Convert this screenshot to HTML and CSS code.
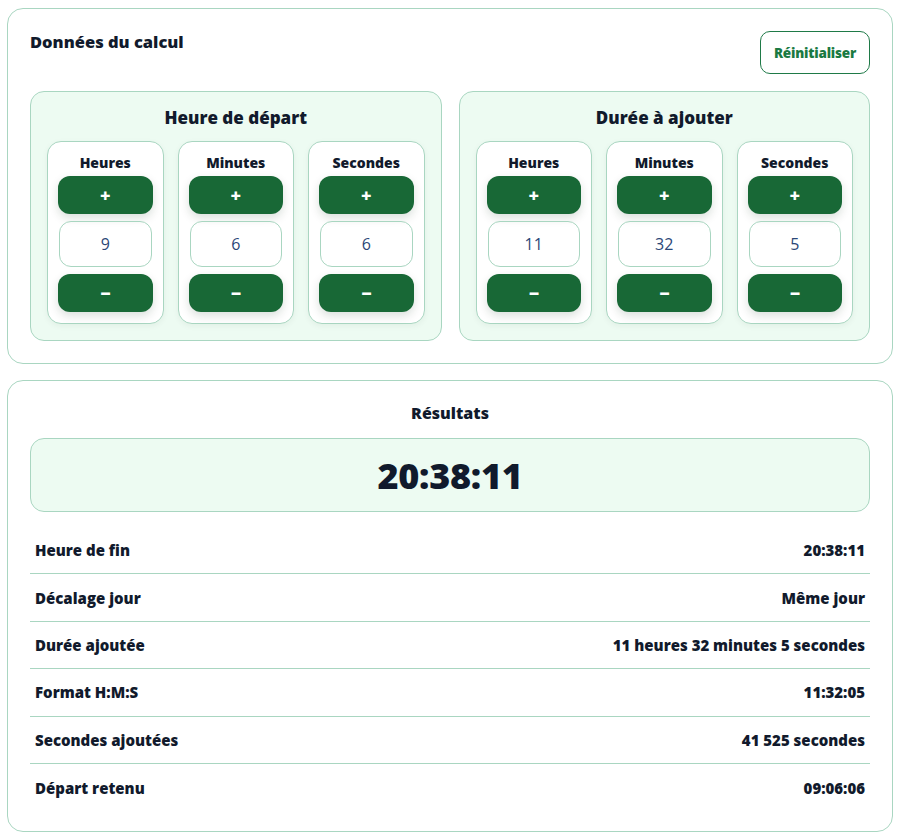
FILE: index.html
```html
<!DOCTYPE html>
<html lang="fr">
<head>
<meta charset="utf-8">
<title>Calcul</title>
<link rel="stylesheet" href="styles.css">
</head>
<body>
<main class="page">
  <section class="card inputs">
    <div class="card-head">
      <h2 class="card-title">Données du calcul</h2>
      <button class="reset">Réinitialiser</button>
    </div>
    <div class="groups">
      <div class="group">
        <h3 class="group-title">Heure de départ</h3>
        <div class="units">
          <div class="unit">
            <div class="unit-label">Heures</div>
            <button class="step">+</button>
            <div class="value">9</div>
            <button class="step">−</button>
          </div>
          <div class="unit">
            <div class="unit-label">Minutes</div>
            <button class="step">+</button>
            <div class="value">6</div>
            <button class="step">−</button>
          </div>
          <div class="unit">
            <div class="unit-label">Secondes</div>
            <button class="step">+</button>
            <div class="value">6</div>
            <button class="step">−</button>
          </div>
        </div>
      </div>
      <div class="group">
        <h3 class="group-title">Durée à ajouter</h3>
        <div class="units">
          <div class="unit">
            <div class="unit-label">Heures</div>
            <button class="step">+</button>
            <div class="value">11</div>
            <button class="step">−</button>
          </div>
          <div class="unit">
            <div class="unit-label">Minutes</div>
            <button class="step">+</button>
            <div class="value">32</div>
            <button class="step">−</button>
          </div>
          <div class="unit">
            <div class="unit-label">Secondes</div>
            <button class="step">+</button>
            <div class="value">5</div>
            <button class="step">−</button>
          </div>
        </div>
      </div>
    </div>
  </section>

  <section class="card results">
    <h2 class="results-title">Résultats</h2>
    <div class="big">20:38:11</div>
    <div class="rows">
      <div class="row"><span>Heure de fin</span><span>20:38:11</span></div>
      <div class="row"><span>Décalage jour</span><span>Même jour</span></div>
      <div class="row"><span>Durée ajoutée</span><span>11 heures 32 minutes 5 secondes</span></div>
      <div class="row"><span>Format H:M:S</span><span>11:32:05</span></div>
      <div class="row"><span>Secondes ajoutées</span><span>41 525 secondes</span></div>
      <div class="row"><span>Départ retenu</span><span>09:06:06</span></div>
    </div>
  </section>
</main>
</body>
</html>
```

FILE: styles.css
```css
* { box-sizing: border-box; }
html, body { margin: 0; padding: 0; background: #ffffff; }
body {
  font-family: "Open Sans", "Noto Sans", sans-serif;
  color: #111a2c;
}
.page {
  padding: 8px 7px 0 7px;
  display: flex;
  flex-direction: column;
  gap: 16px;
}
.card {
  border: 1px solid #a9d6c1;
  border-radius: 16px;
  background: #fff;
  padding: 21px 22px 22px 22px;
}
.card-head {
  display: flex;
  justify-content: space-between;
  align-items: flex-start;
  height: 61px;
}
.card-title {
  margin: 1px 0 0 0;
  font-size: 16.5px;
  font-weight: 800;
  line-height: 22px;
}
.reset {
  font-family: inherit;
  margin-top: 1px;
  height: 43px;
  width: 110px;
  border: 1px solid #1f7a48;
  border-radius: 10px;
  background: #fff;
  color: #1a7a42;
  font-weight: 800;
  font-size: 13.5px;
  letter-spacing: -0.2px;
}
.groups {
  display: grid;
  grid-template-columns: 1fr 1fr;
  gap: 17px;
}
.group {
  background: #edfbf2;
  border: 1px solid #a9d6c1;
  border-radius: 14px;
  padding: 14px 16px 16px 16px;
}
.group-title {
  margin: 0 0 11px 0;
  text-align: center;
  font-size: 17px;
  font-weight: 800;
  line-height: 24px;
}
.units {
  display: grid;
  grid-template-columns: 1fr 1fr 1fr;
  gap: 14px;
}
.unit {
  background: #fff;
  border: 1px solid #a9d6c1;
  border-radius: 14px;
  padding: 11px 10px 11px 10px;
  display: flex;
  flex-direction: column;
  gap: 7px;
  box-shadow: 0 2px 6px rgba(0, 40, 20, 0.05);
}
.unit-label {
  text-align: center;
  font-size: 14px;
  font-weight: 800;
  line-height: 20px;
  margin-bottom: -4px;
}
.step {
  font-family: inherit;
  height: 38px;
  border: 0;
  border-radius: 12px;
  background: #186836;
  color: #fff;
  font-size: 18px;
  font-weight: 800;
  box-shadow: 0 4px 10px rgba(0, 50, 20, 0.15);
}
.value {
  height: 46px;
  border: 1px solid #a9d6c1;
  border-radius: 12px;
  display: flex;
  align-items: center;
  justify-content: center;
  font-size: 16px;
  color: #2b4777;
  margin: 0 1px;
}
.results { padding-top: 21px; padding-bottom: 20px; }
.results-title {
  margin: 0 0 14px 0;
  text-align: center;
  font-size: 16px;
  font-weight: 800;
  line-height: 22px;
}
.big {
  background: #edfbf2;
  border: 1px solid #a9d6c1;
  border-radius: 14px;
  height: 74px;
  display: flex;
  align-items: center;
  justify-content: center;
  font-size: 36px;
  font-weight: 800;
  letter-spacing: -0.3px;
  margin-bottom: 15px;
}
.rows { display: flex; flex-direction: column; }
.row {
  display: flex;
  justify-content: space-between;
  align-items: center;
  height: 47.4px;
  padding: 0 5px;
  border-bottom: 1px solid #a9d6c1;
  font-size: 15px;
  font-weight: 800;
}
.row:last-child { border-bottom: 0; }
```
